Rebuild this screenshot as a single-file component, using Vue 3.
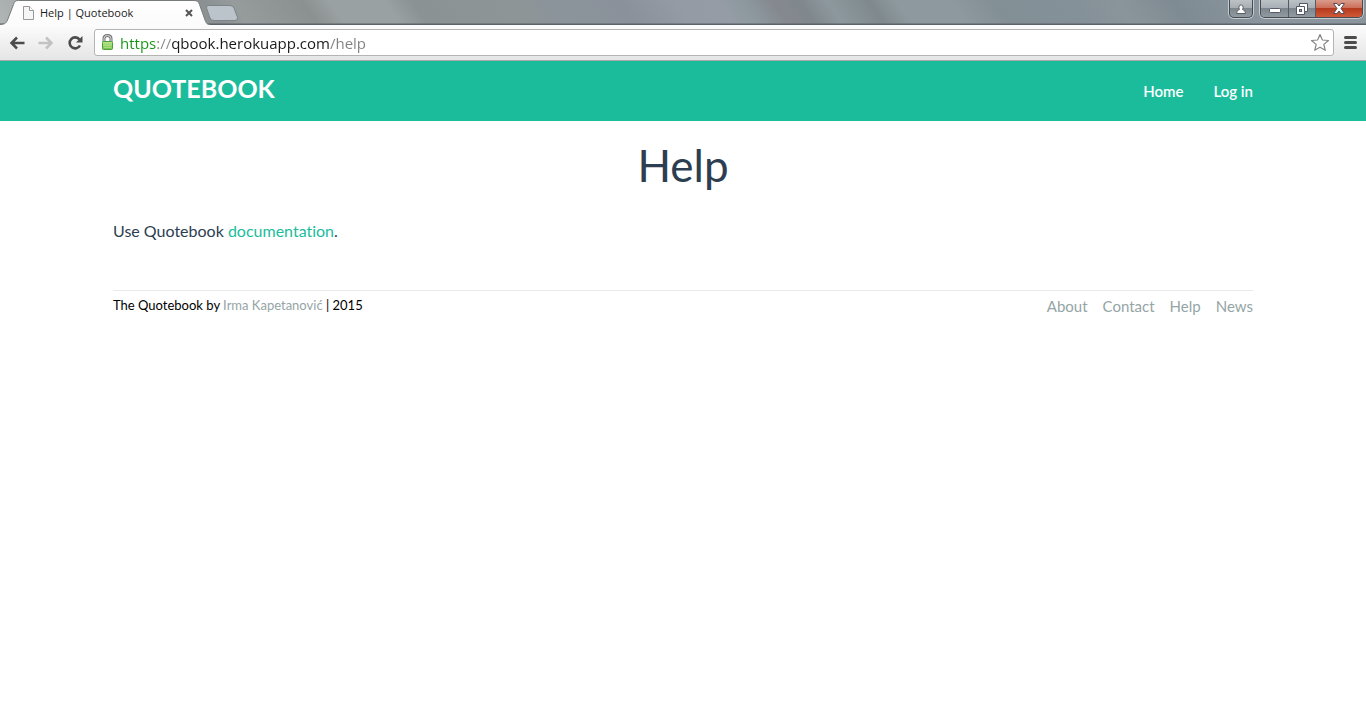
<script setup>
import { ref } from 'vue'

const address = ref('https://qbook.herokuapp.com/help')
const footerLinks = ['About', 'Contact', 'Help', 'News']
</script>

<template>
  <div class="browser">
    <div class="titlebar">
      <div class="tab">
        <svg class="tab-shape" width="210" height="25" viewBox="0 0 210 25">
          <defs>
            <linearGradient id="tabFill" x1="0" y1="0" x2="0" y2="1">
              <stop offset="0" stop-color="#ffffff" />
              <stop offset="1" stop-color="#fbfbfb" />
            </linearGradient>
          </defs>
          <path d="M0 25 V24.500 C4 24.500 6 23.500 7.500 20 L13.500 4.500 C14.500 1.500 15.500 .5 18.500 .5 H194 C197 .5 198.500 1.500 199.500 4.500 L205 20 C206.500 23.500 207 24.500 210 24.500 V25 Z" fill="url(#tabFill)" />
          <path d="M0 24.500 C4 24.500 6 23.500 7.500 20 L13.500 4.500 C14.500 1.500 15.500 .5 18.500 .5 H194 C197 .5 198.500 1.500 199.500 4.500 L205 20 C206.500 23.500 207 24.500 210 24.500" fill="none" stroke="#777b7c" />
        </svg>
        <svg class="page-icon" width="11" height="14" viewBox="0 0 11 14">
          <path d="M.5 .5 H6.500 L10.500 4.500 V13.500 H.5 Z" fill="#f6f6f6" stroke="#999" />
          <path d="M6.500 .5 V4.500 H10.500" fill="#fff" stroke="#999" />
        </svg>
        <span class="tab-title">Help | Quotebook</span>
        <button class="tab-close" aria-label="Close tab">
          <svg width="8" height="8" viewBox="0 0 8 8"><path d="M1 1 L7 7 M7 1 L1 7" stroke="#555" stroke-width="2" /></svg>
        </button>
      </div>
      <button class="new-tab" aria-label="New tab">
        <svg width="34" height="16" viewBox="0 0 34 16">
          <path d="M3.500 .5 H25 Q28 .5 29 3 L32.500 12.500 Q33 15.500 30 15.500 H9 Q6 15.500 5 13 L1.500 3 Q1 .5 3.500 .5 Z" fill="#bcc4cb" stroke="#7e8589" />
        </svg>
      </button>
      <div class="window-buttons">
        <button class="profile" aria-label="Profile">
          <svg width="10" height="10" viewBox="0 0 10 10">
            <path d="M3.500 5.500 Q2.500 4 3 2 Q5 -.5 7 2 Q7.500 4 6.500 5.500 Q9.500 6 9.500 9.500 H.5 Q.5 6 3.500 5.500 Z" fill="#fff" stroke="#596066" />
          </svg>
        </button>
        <div class="caption">
          <button class="minimize" aria-label="Minimize">
            <svg width="12" height="5" viewBox="0 0 12 5"><rect x=".5" y=".5" width="11" height="4" rx="1" fill="#fff" stroke="#555b68" /></svg>
          </button>
          <button class="restore" aria-label="Restore">
            <svg width="12" height="12" viewBox="0 0 12 12">
              <path d="M3.500 .5 H11.500 V8.500 H8.500 V11.500 H.5 V3.500 H3.500 Z" fill="#fff" stroke="#535866" />
              <path d="M3.500 3.500 H8.500 V8.500" fill="none" stroke="#535866" />
              <rect x="3.500" y="6.500" width="2" height="2" fill="#aaa" stroke="#535866" />
            </svg>
          </button>
          <button class="close" aria-label="Close">
            <svg width="12" height="11" viewBox="0 0 12 11">
              <path d="M.5 .5 H4 L6 3 L8 .5 H11.500 L8 5.500 L11.500 10.500 H8 L6 8 L4 10.500 H.5 L4 5.500 Z" fill="#fff" stroke="#544c58" />
            </svg>
          </button>
        </div>
      </div>
    </div>

    <div class="toolbar">
      <button class="tool" aria-label="Back">
        <svg width="16" height="14" viewBox="0 0 16 14"><path d="M15.500 7 H2.500 M8 1.500 L2.500 7 L8 12.500" fill="none" stroke="#4c4c4c" stroke-width="2.500" /></svg>
      </button>
      <button class="tool" aria-label="Forward">
        <svg width="16" height="14" viewBox="0 0 16 14"><path d="M.5 7 H13.500 M8 1.500 L13.500 7 L8 12.500" fill="none" stroke="#c2c2c2" stroke-width="2.500" /></svg>
      </button>
      <button class="tool" aria-label="Reload">
        <svg width="16" height="16" viewBox="0 0 16 16">
          <path d="M12.500 4.500 A5.500 5.500 0 1 0 13 10.500" fill="none" stroke="#4c4c4c" stroke-width="2.600" />
          <path d="M15.500 1 V7.500 H9 Z" fill="#4c4c4c" />
        </svg>
      </button>
      <div class="omnibox">
        <svg width="13" height="17" viewBox="0 0 13 17">
          <defs>
            <linearGradient id="lockFill" x1="0" y1="0" x2="0" y2="1">
              <stop offset="0" stop-color="#bce78f" />
              <stop offset="1" stop-color="#73c34b" />
            </linearGradient>
          </defs>
          <path d="M3 8 V4.500 Q3 1.500 6.500 1.500 Q10 1.500 10 4.500 V8" fill="none" stroke="#777" stroke-width="3" />
          <path d="M3 8 V4.500 Q3 1.500 6.500 1.500 Q10 1.500 10 4.500 V8" fill="none" stroke="#ddd" />
          <rect x="1.500" y="7.500" width="10" height="8" rx="1" fill="url(#lockFill)" stroke="#4d9e3f" />
          <path d="M3 9.500 H10 M3 11.500 H10 M3 13.500 H10" stroke="#a9dd7d" />
        </svg>
        <input v-model="address" class="address" type="text" aria-label="Address" spellcheck="false" />
        <button class="star" aria-label="Bookmark this page">
          <svg width="20" height="19" viewBox="0 0 20 19">
            <path d="M10 1.500 L12.400 7 L18.500 7.500 L13.800 11.400 L15.300 17.300 L10 14.200 L4.700 17.300 L6.200 11.400 L1.500 7.500 L7.600 7 Z" fill="#fff" stroke="#858585" stroke-width="1.200" stroke-linejoin="round" />
          </svg>
        </button>
      </div>
      <button class="menu" aria-label="Menu">
        <svg width="13" height="13" viewBox="0 0 13 13"><path d="M1.500 1.500 H11.500 M1.500 6.500 H11.500 M1.500 11.500 H11.500" stroke="#4c4c4c" stroke-width="3" stroke-linecap="round" /></svg>
      </button>
    </div>

    <header class="site-header">
      <div class="container header-row">
        <a class="logo" href="#">QUOTEBOOK</a>
        <nav class="main-nav">
          <a href="#">Home</a>
          <a href="#">Log in</a>
        </nav>
      </div>
    </header>

    <div class="container">
      <main>
        <h1>Help</h1>
        <p>Use Quotebook <a href="#">documentation</a>.</p>
      </main>
      <footer class="site-footer">
        <small>The Quotebook by <a href="#">Irma Kapetanović</a> | 2015</small>
        <nav>
          <a v-for="link in footerLinks" :key="link" href="#">{{ link }}</a>
        </nav>
      </footer>
    </div>
  </div>
</template>

<style>
body {
  margin: 0;
  background: #fff;
}
</style>

<style scoped>
.browser {
  font-family: Lato, "Liberation Sans", sans-serif;
  font-size: 15px;
  font-variant-ligatures: none;
  color: #2c3e50;
}
button {
  display: flex;
  align-items: center;
  justify-content: center;
  margin: 0;
  padding: 0;
  border: 0;
  background: none;
}
a {
  text-decoration: none;
}

.titlebar {
  display: flex;
  align-items: flex-start;
  height: 25px;
  background:
    linear-gradient(#0000 23px, #5b6267 24px),
    linear-gradient(55deg, #b0b5b5 0, #a5aaab 3%, #8b9192 16%, #969b9c 18%, #8b9090 23%, #9aa1a2 25%, #9aa1a2 29%, #8a9293 31%, #8d9596 38%, #8b949b 41%, #8a919a 46%, #949ba4 50%, #959ca5 53%, #8c989e 55%, #85898f 57%, #80888d 59%, #8d989e 61%, #7f898d 64%, #8e999f 66%, #8e999f 70%, #828f95 73%, #859198 79%, #8a959b 82%, #7f8b92 86%, #8a959e 92%, #89949b 100%);
}
.tab {
  position: relative;
  display: flex;
  align-items: center;
  box-sizing: border-box;
  width: 209px;
  height: 25px;
  padding: 0 15px 0 23px;
}
.tab-shape {
  position: absolute;
  left: 0;
  top: 0;
}
.page-icon,
.tab-title,
.tab-close {
  position: relative;
}
.tab-title {
  flex: 1;
  margin-left: 6px;
  font: 11px/24px "Open Sans", "Noto Sans", sans-serif;
  color: #1b1b1b;
  white-space: nowrap;
}
.tab-close {
  width: 10px;
  height: 12px;
}
.new-tab {
  margin: 5px 0 0 -4px;
}
.window-buttons {
  display: flex;
  gap: 7px;
  margin-left: auto;
  padding-right: 3px;
}
.profile,
.caption {
  box-sizing: border-box;
  height: 18px;
  border: 1px solid #464c51;
  border-top: 0;
  border-radius: 0 0 5px 5px;
  box-shadow: 0 0 0 1px #c4cbd0;
  overflow: hidden;
}
.profile {
  width: 24px;
}
.profile,
.minimize,
.restore {
  background: linear-gradient(#bcc2c6 0, #a9b0b5 45%, #7d868d 50%, #929ba1 100%);
}
.caption {
  display: flex;
  width: 103px;
}
.minimize,
.restore {
  width: 27px;
  border-right: 1px solid #545b61;
}
.minimize {
  width: 28px;
  padding-top: 4px;
}
.close {
  flex: 1;
  background: linear-gradient(#d99c8c 0, #cc705a 45%, #b53a20 50%, #cf5a35 100%);
}

.toolbar {
  display: flex;
  align-items: center;
  box-sizing: border-box;
  height: 36px;
  padding: 0 9px 0 9px;
  border-bottom: 1px solid #a9a9a9;
  background: linear-gradient(#fcfcfc, #e5e5e5);
}
.tool {
  width: 16px;
  margin-right: 13px;
}
.omnibox {
  display: flex;
  flex: 1;
  align-items: center;
  box-sizing: border-box;
  height: 27px;
  margin: 0 10px 0 -2px;
  padding: 0 3px 0 6px;
  border: 1px solid #b4b4b4;
  border-radius: 3px;
  background: #fff;
}
.address {
  flex: 1;
  min-width: 0;
  height: 24px;
  margin-left: 6px;
  padding: 0;
  border: 0;
  outline: 0;
  font: 15px/24px "Open Sans", "Noto Sans", sans-serif;
  color: transparent;
  background: linear-gradient(90deg, #159415 0 37px, #8a8a8a 37px 51px, #1a1a1a 51px 210px, #808080 210px);
  background-clip: text;
}

.container {
  box-sizing: border-box;
  max-width: 1170px;
  margin: 0 auto;
  padding: 0 15px;
}
.site-header {
  background: #1abc9c;
}
.header-row {
  display: flex;
  align-items: center;
  justify-content: space-between;
  height: 60px;
}
.logo {
  padding-bottom: 6px;
  font-size: 25px;
  font-weight: 700;
  color: #fff;
}
.main-nav {
  display: flex;
  gap: 30px;
  font-size: 15px;
  font-weight: 600;
}
.main-nav a {
  color: #fff;
}
h1 {
  margin: 16px 0 26px;
  font-size: 44px;
  font-weight: 400;
  line-height: 56px;
  text-align: center;
}
p {
  margin: 0;
  font-size: 16px;
  line-height: 24px;
}
p a {
  color: #1abc9c;
}
.site-footer {
  display: flex;
  justify-content: space-between;
  margin-top: 47px;
  padding-top: 4px;
  border-top: 1px solid #eaeaea;
  line-height: 22px;
}
.site-footer small {
  font-size: 13px;
  line-height: 20px;
  color: #000;
}
.site-footer nav {
  display: flex;
  gap: 15px;
}
.site-footer a {
  color: #95a5a6;
}
</style>
